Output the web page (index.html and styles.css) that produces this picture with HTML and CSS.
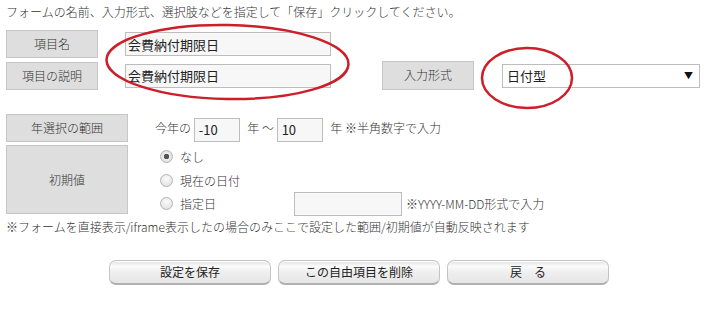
FILE: index.html
```html
<!DOCTYPE html>
<html lang="ja">
<head>
    <meta charset="UTF-8">
    <title>自由項目の設定</title>
    <link rel="stylesheet" href="styles.css">
</head>
<body>
    <div class="page">
        <p class="lead">フォームの名前、入力形式、選択肢などを指定して「保存」クリックしてください。</p>

        <div class="row">
            <div class="label">項目名</div>
            <input class="text" type="text" value="会費納付期限日">
        </div>
        <div class="row">
            <div class="label">項目の説明</div>
            <input class="text" type="text" value="会費納付期限日">
            <div class="label label-type">入力形式</div>
            <div class="select">
                <span>日付型</span>
                <span class="arrow">▼</span>
            </div>
        </div>

        <div class="row row-range">
            <div class="label label-wide">年選択の範囲</div>
            <div class="range">今年の <input class="num" type="text" value="-10"> 年 ～ <input class="num" type="text" value="10"> 年 ※半角数字で入力</div>
        </div>
        <div class="row row-init">
            <div class="label label-wide label-tall">初期値</div>
            <div class="radios">
                <label class="radio"><input type="radio" name="init" checked><span>なし</span></label>
                <label class="radio"><input type="radio" name="init"><span>現在の日付</span></label>
                <label class="radio"><input type="radio" name="init"><span class="date-label">指定日</span><input class="date" type="text"><span>※YYYY-MM-DD形式で入力</span></label>
            </div>
        </div>

        <p class="note">※フォームを直接表示/iframe表示したの場合のみここで設定した範囲/初期値が自動反映されます</p>

        <div class="buttons">
            <button class="btn">設定を保存</button>
            <button class="btn">この自由項目を削除</button>
            <button class="btn">戻　る</button>
        </div>
    </div>

    <svg class="marks" width="710" height="314" viewBox="0 0 710 314">
        <ellipse cx="227.5" cy="62" rx="121" ry="37" transform="rotate(1 227.5 62)"/>
        <ellipse cx="527" cy="78" rx="45" ry="30"/>
    </svg>
</body>
</html>
```

FILE: styles.css
```css
* {
    margin: 0;
    padding: 0;
    box-sizing: border-box;
}
body {
    font-family: "Noto Sans CJK JP", "Noto Sans", sans-serif;
    font-size: 12px;
    font-weight: 300;
    color: #333;
    background: #fff;
    width: 710px;
    height: 314px;
    overflow: hidden;
}
.page {
    padding: 4px 6px 0;
}
.lead {
    line-height: 16px;
    margin-bottom: 10px;
}
.row {
    display: flex;
    align-items: center;
    margin-bottom: 3px;
}
.label {
    width: 92px;
    height: 28px;
    line-height: 26px;
    text-align: center;
    background: #dedede;
    border: 1px solid #c6c6c6;
    flex-shrink: 0;
}
.text {
    margin-left: 27px;
    width: 206px;
    height: 24px;
    padding: 0 2px;
    font-family: inherit;
    font-weight: 400;
    font-size: 13px;
    color: #222;
    background: #f7f7f7;
    border: 1px solid #bdbdbd;
    outline: none;
}
.label-type {
    margin-left: 51px;
    height: 29px;
}
.select {
    margin-left: 28px;
    width: 198px;
    height: 24px;
    display: flex;
    align-items: center;
    justify-content: space-between;
    padding: 0 6px 0 4px;
    font-size: 13px;
    font-weight: 400;
    color: #222;
    background: #fff;
    border: 1px solid #bdbdbd;
}
.arrow {
    font-size: 9px;
    color: #111;
}
.row-range {
    margin-top: 24px;
}
.label-wide {
    width: 122px;
}
.label-tall {
    height: 69px;
    line-height: 67px;
}
.range {
    margin-left: 27px;
    line-height: 28px;
}
.num {
    width: 46px;
    height: 24px;
    padding: 0 4px;
    margin-right: 5px;
    vertical-align: middle;
    font-family: inherit;
    font-weight: 400;
    font-size: 13px;
    color: #222;
    background: #f7f7f7;
    border: 1px solid #bdbdbd;
    outline: none;
}
.row-init {
    align-items: flex-start;
}
.radios {
    margin-left: 32px;
    display: flex;
    flex-direction: column;
}
.radio {
    display: flex;
    align-items: center;
    height: 23.5px;
}
.radio input[type="radio"] {
    appearance: none;
    -webkit-appearance: none;
    width: 13px;
    height: 13px;
    border-radius: 50%;
    border: 1px solid #b4b4b4;
    background: radial-gradient(circle at 50% 35%, #fbfbfb, #dcdcdc);
    margin-right: 7px;
}
.radio input[type="radio"]:checked {
    background: radial-gradient(circle, #555 0 2.5px, #ececec 3px, #d8d8d8 100%);
}
.date-label {
    width: 114px;
}
.date {
    width: 108px;
    height: 24px;
    background: #f7f7f7;
    border: 1px solid #bdbdbd;
    outline: none;
    margin-right: 4px;
}
.note {
    line-height: 16px;
    margin-top: 1px;
}
.buttons {
    display: flex;
    gap: 7px;
    margin: 25px 0 0 103px;
}
.btn {
    width: 162px;
    height: 25px;
    font-family: inherit;
    font-weight: 400;
    font-size: 12px;
    color: #222;
    border: 1px solid #c4c4c4;
    border-bottom: 2px solid #b0b0b0;
    border-radius: 7px;
    background: linear-gradient(to bottom, #e2e2e2 0%, #fbfbfb 25%, #f0f0f0 45%, #e6e6e6 100%);
    box-shadow: inset 0 1px 0 #fff;
    cursor: pointer;
}
.marks {
    position: absolute;
    left: 0;
    top: 0;
    pointer-events: none;
}
.marks ellipse {
    fill: none;
    stroke: #cc1f2a;
    stroke-width: 2.5;
}
```
